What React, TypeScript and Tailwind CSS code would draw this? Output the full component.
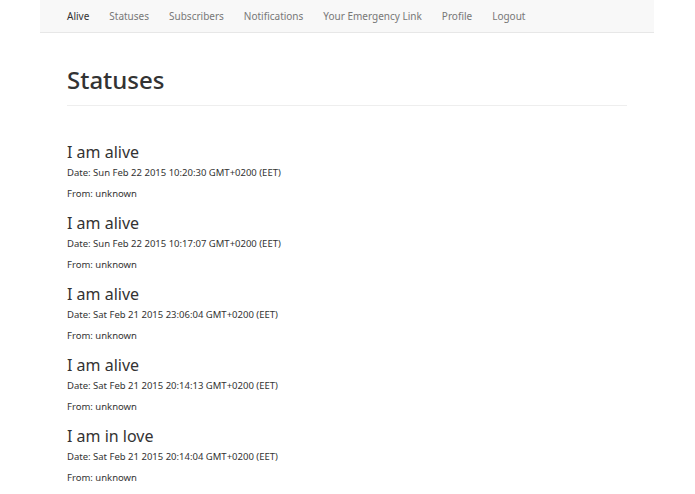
import React from "react";

const statuses = [
  { title: "I am alive", date: "Sun Feb 22 2015 10:20:30 GMT+0200 (EET)" },
  { title: "I am alive", date: "Sun Feb 22 2015 10:17:07 GMT+0200 (EET)" },
  { title: "I am alive", date: "Sat Feb 21 2015 23:06:04 GMT+0200 (EET)" },
  { title: "I am alive", date: "Sat Feb 21 2015 20:14:13 GMT+0200 (EET)" },
  { title: "I am in love", date: "Sat Feb 21 2015 20:14:04 GMT+0200 (EET)" },
];

const links = ["Statuses", "Subscribers", "Notifications", "Your Emergency Link", "Profile", "Logout"];

export default function App() {
  return (
    <div className="min-h-[494px] bg-white text-[#333] font-['Liberation_Sans',Arial,sans-serif]">
      <div className="mx-[40px] w-[614px]">
        <nav className="h-[33px] bg-[#f8f8f8] border-b border-[#e7e7e7] flex items-center px-[27px] text-[10px]">
          <span className="text-[#333] mr-[20px]">Alive</span>
          <div className="flex gap-[20px] text-[#777]">
            {links.map((l) => (
              <span key={l}>{l}</span>
            ))}
          </div>
        </nav>
        <div className="px-[27px]">
          <h1 className="text-[24px] leading-[26px] font-medium mt-[34px] pb-[12px] border-b border-[#eee]">Statuses</h1>
          <div className="mt-[37px]">
            {statuses.map((s, i) => (
              <div key={i} className="h-[71px]">
                <h3 className="text-[16px] leading-[18px]">{s.title}</h3>
                <p className="text-[9.5px] leading-[12px] mt-[6px]">Date: {s.date}</p>
                <p className="text-[9.5px] leading-[12px] mt-[9px]">From: unknown</p>
              </div>
            ))}
          </div>
        </div>
      </div>
    </div>
  );
}
